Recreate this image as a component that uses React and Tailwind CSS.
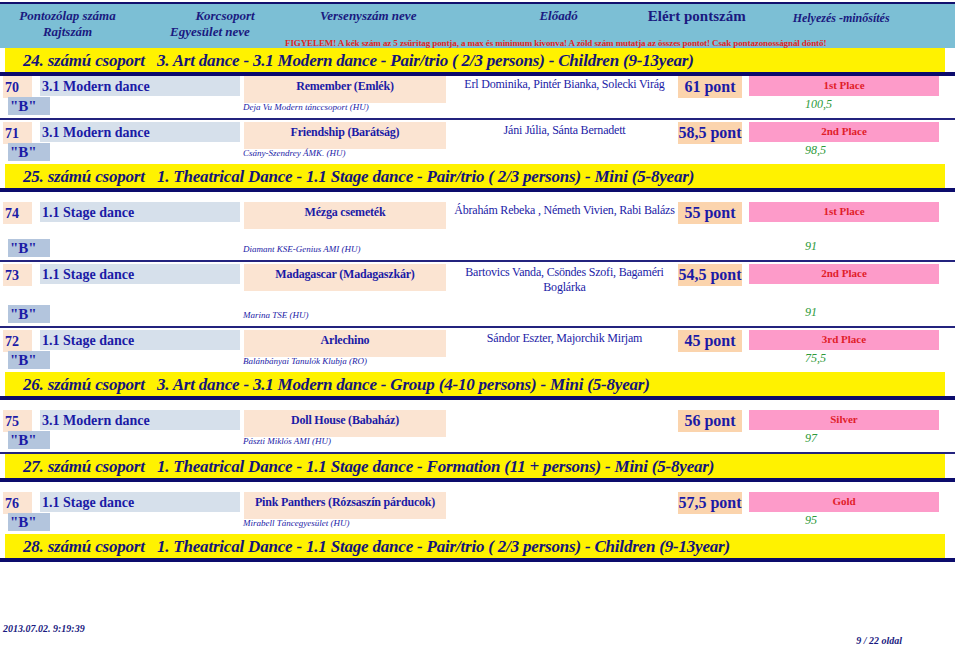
const F = { fontFamily: '"Liberation Serif", "DejaVu Serif", serif' };

function Group({ text }) {
  return (
    <div className="w-[955px]">
      <div className="h-[24px] w-[940px] ml-[5px] bg-[#fff200] pl-[18px] flex items-center text-[17px] italic font-bold text-[#14147a] leading-none whitespace-pre tracking-[-0.2px]">
        {text}
      </div>
      <div className="h-[4px] bg-[#0c0c6c]" />
    </div>
  );
}

function Entry({ no, cat, title, perf, pts, place, club, score, tall, line = true, mt = "mt-0" }) {
  return (
    <div className={`${mt} w-[955px] ${line ? "border-b-2 border-[#23237e]" : ""}`}>
      <div className="flex items-start text-[#1b1ba6] font-bold">
        <div className="ml-[3px] w-[29px] h-[22px] bg-[#fbe4d2] flex items-center pl-[2px] text-[14px]">{no}</div>
        <div className="ml-[8px] w-[200px] h-[20px] bg-[#d6e0eb] flex items-center pl-[2px] text-[14px]">{cat}</div>
        <div className="ml-[4px] w-[202px] h-[27px] bg-[#fbe4d2] flex justify-center pt-[1px] text-[12px] whitespace-nowrap tracking-[-0.2px]">{title}</div>
        <div className="ml-[6px] w-[225px] text-center font-normal text-[12px] leading-[15px] pt-[1px] tracking-[-0.2px]">{perf}</div>
        <div className="ml-[1px] w-[64px] h-[22px] bg-[#fbd4ad] flex items-center justify-center text-[16px] whitespace-nowrap">{pts}</div>
        <div className="ml-[7px] w-[190px] h-[20px] bg-[#fd9bc9] flex justify-center pt-[1px] text-[11px] text-[#e11d2a]">{place}</div>
      </div>
      <div className={`flex items-end ${tall ? "mt-[10px]" : "mt-[-6px]"} pb-[3px]`}>
        <div className="ml-[8px] w-[42px] h-[18px] bg-[#b3c5dd] text-[#1b1ba6] font-bold text-[15px] leading-[18px] pl-[2px]">"B"</div>
        <div className="ml-[193px] w-[500px] italic text-[9px] text-[#1b1ba6] pb-[1px]">{club}</div>
        <div className="ml-[62px] italic text-[12px] text-[#2e9a3a] self-start mt-[-2px]">{score}</div>
      </div>
    </div>
  );
}

export default function App() {
  return (
    <div style={F} className="w-[960px] h-[651px] bg-white flex flex-col relative">
      <div className="mt-[2px] w-[955px] h-[46px] bg-[#7cbfd5] border-t-2 border-[#11116e] flex text-[#1a1a80] italic font-bold text-[13px] leading-[16px] pt-[4px]">
        <div className="w-[135px] flex flex-col items-center">
          <span>Pontozólap száma</span>
          <span>Rajtszám</span>
        </div>
        <div className="w-[150px] flex flex-col items-center">
          <span className="pl-[30px]">Korcsoport</span>
          <span>Egyesület neve</span>
        </div>
        <div className="flex-1 flex flex-col">
          <div className="flex">
            <span className="ml-[35px]">Versenyszám neve</span>
            <span className="ml-[123px]">Előadó</span>
            <span className="ml-[70px] not-italic text-[15px]">Elért pontszám</span>
            <span className="ml-[47px] text-[12px] mt-[2px]">Helyezés -minősítés</span>
          </div>
          <div className="mt-[9px] text-[9px] not-italic text-[#e01f1f] whitespace-nowrap tracking-[-0.1px]">FIGYELEM! A kék szám az 5 zsűritag pontja, a max és minimum kivonva! A zöld szám mutatja az összes pontot! Csak pontazonosságnál döntő!</div>
        </div>
      </div>
      <Group text="24. számú csoport   3. Art dance - 3.1 Modern dance - Pair/trio ( 2/3 persons) - Children (9-13year)" />
      <Entry no="70" cat="3.1 Modern dance" title="Remember (Emlék)" perf="Erl Dominika, Pintér Bianka, Solecki Virág" pts="61 pont" place="1st Place" club="Deja Vu  Modern tánccsoport (HU)" score="100,5" />
      <Entry mt="mt-[2px]" no="71" cat="3.1 Modern dance" title="Friendship (Barátság)" perf="Jáni Júlia, Sánta Bernadett" pts="58,5 pont" place="2nd Place" club="Csány-Szendrey ÁMK. (HU)" score="98,5" line={false} />
      <Group text="25. számú csoport   1. Theatrical Dance - 1.1 Stage dance - Pair/trio ( 2/3 persons) - Mini (5-8year)" />
      <Entry mt="mt-[10px]" tall no="74" cat="1.1 Stage dance" title="Mézga csemeték" perf="Ábrahám Rebeka , Németh Vivien, Rabi Balázs" pts="55 pont" place="1st Place" club="Diamant KSE-Genius AMI (HU)" score="91" />
      <Entry mt="mt-[2px]" tall no="73" cat="1.1 Stage dance" title="Madagascar (Madagaszkár)" perf="Bartovics Vanda, Csöndes Szofi, Bagaméri Boglárka" pts="54,5 pont" place="2nd Place" club="Marina TSE (HU)" score="91" />
      <Entry mt="mt-[2px]" no="72" cat="1.1 Stage dance" title="Arlechino" perf="Sándor Eszter, Majorchik Mirjam" pts="45 pont" place="3rd Place" club="Balánbányai Tanulók Klubja (RO)" score="75,5" line={false} />
      <Group text="26. számú csoport   3. Art dance - 3.1 Modern dance - Group (4-10 persons) - Mini (5-8year)" />
      <Entry mt="mt-[10px]" no="75" cat="3.1 Modern dance" title="Doll House (Babaház)" perf="" pts="56 pont" place="Silver" club="Pászti Miklós AMI (HU)" score="97" />
      <Group text="27. számú csoport   1. Theatrical Dance - 1.1 Stage dance - Formation (11 + persons) - Mini (5-8year)" />
      <Entry mt="mt-[10px]" no="76" cat="1.1 Stage dance" title="Pink Panthers (Rózsaszín párducok)" perf="" pts="57,5 pont" place="Gold" club="Mirabell Táncegyesület (HU)" score="95" line={false} />
      <Group text="28. számú csoport   1. Theatrical Dance - 1.1 Stage dance - Pair/trio ( 2/3 persons) - Children (9-13year)" />
      <div className="flex-1 flex items-end justify-between pb-[3px] pr-[58px] pl-[3px] text-[10px] italic font-bold text-[#1a1a80]">
        <span className="mb-[12px]">2013.07.02. 9:19:39</span>
        <span>9 / 22 oldal</span>
      </div>
    </div>
  );
}
